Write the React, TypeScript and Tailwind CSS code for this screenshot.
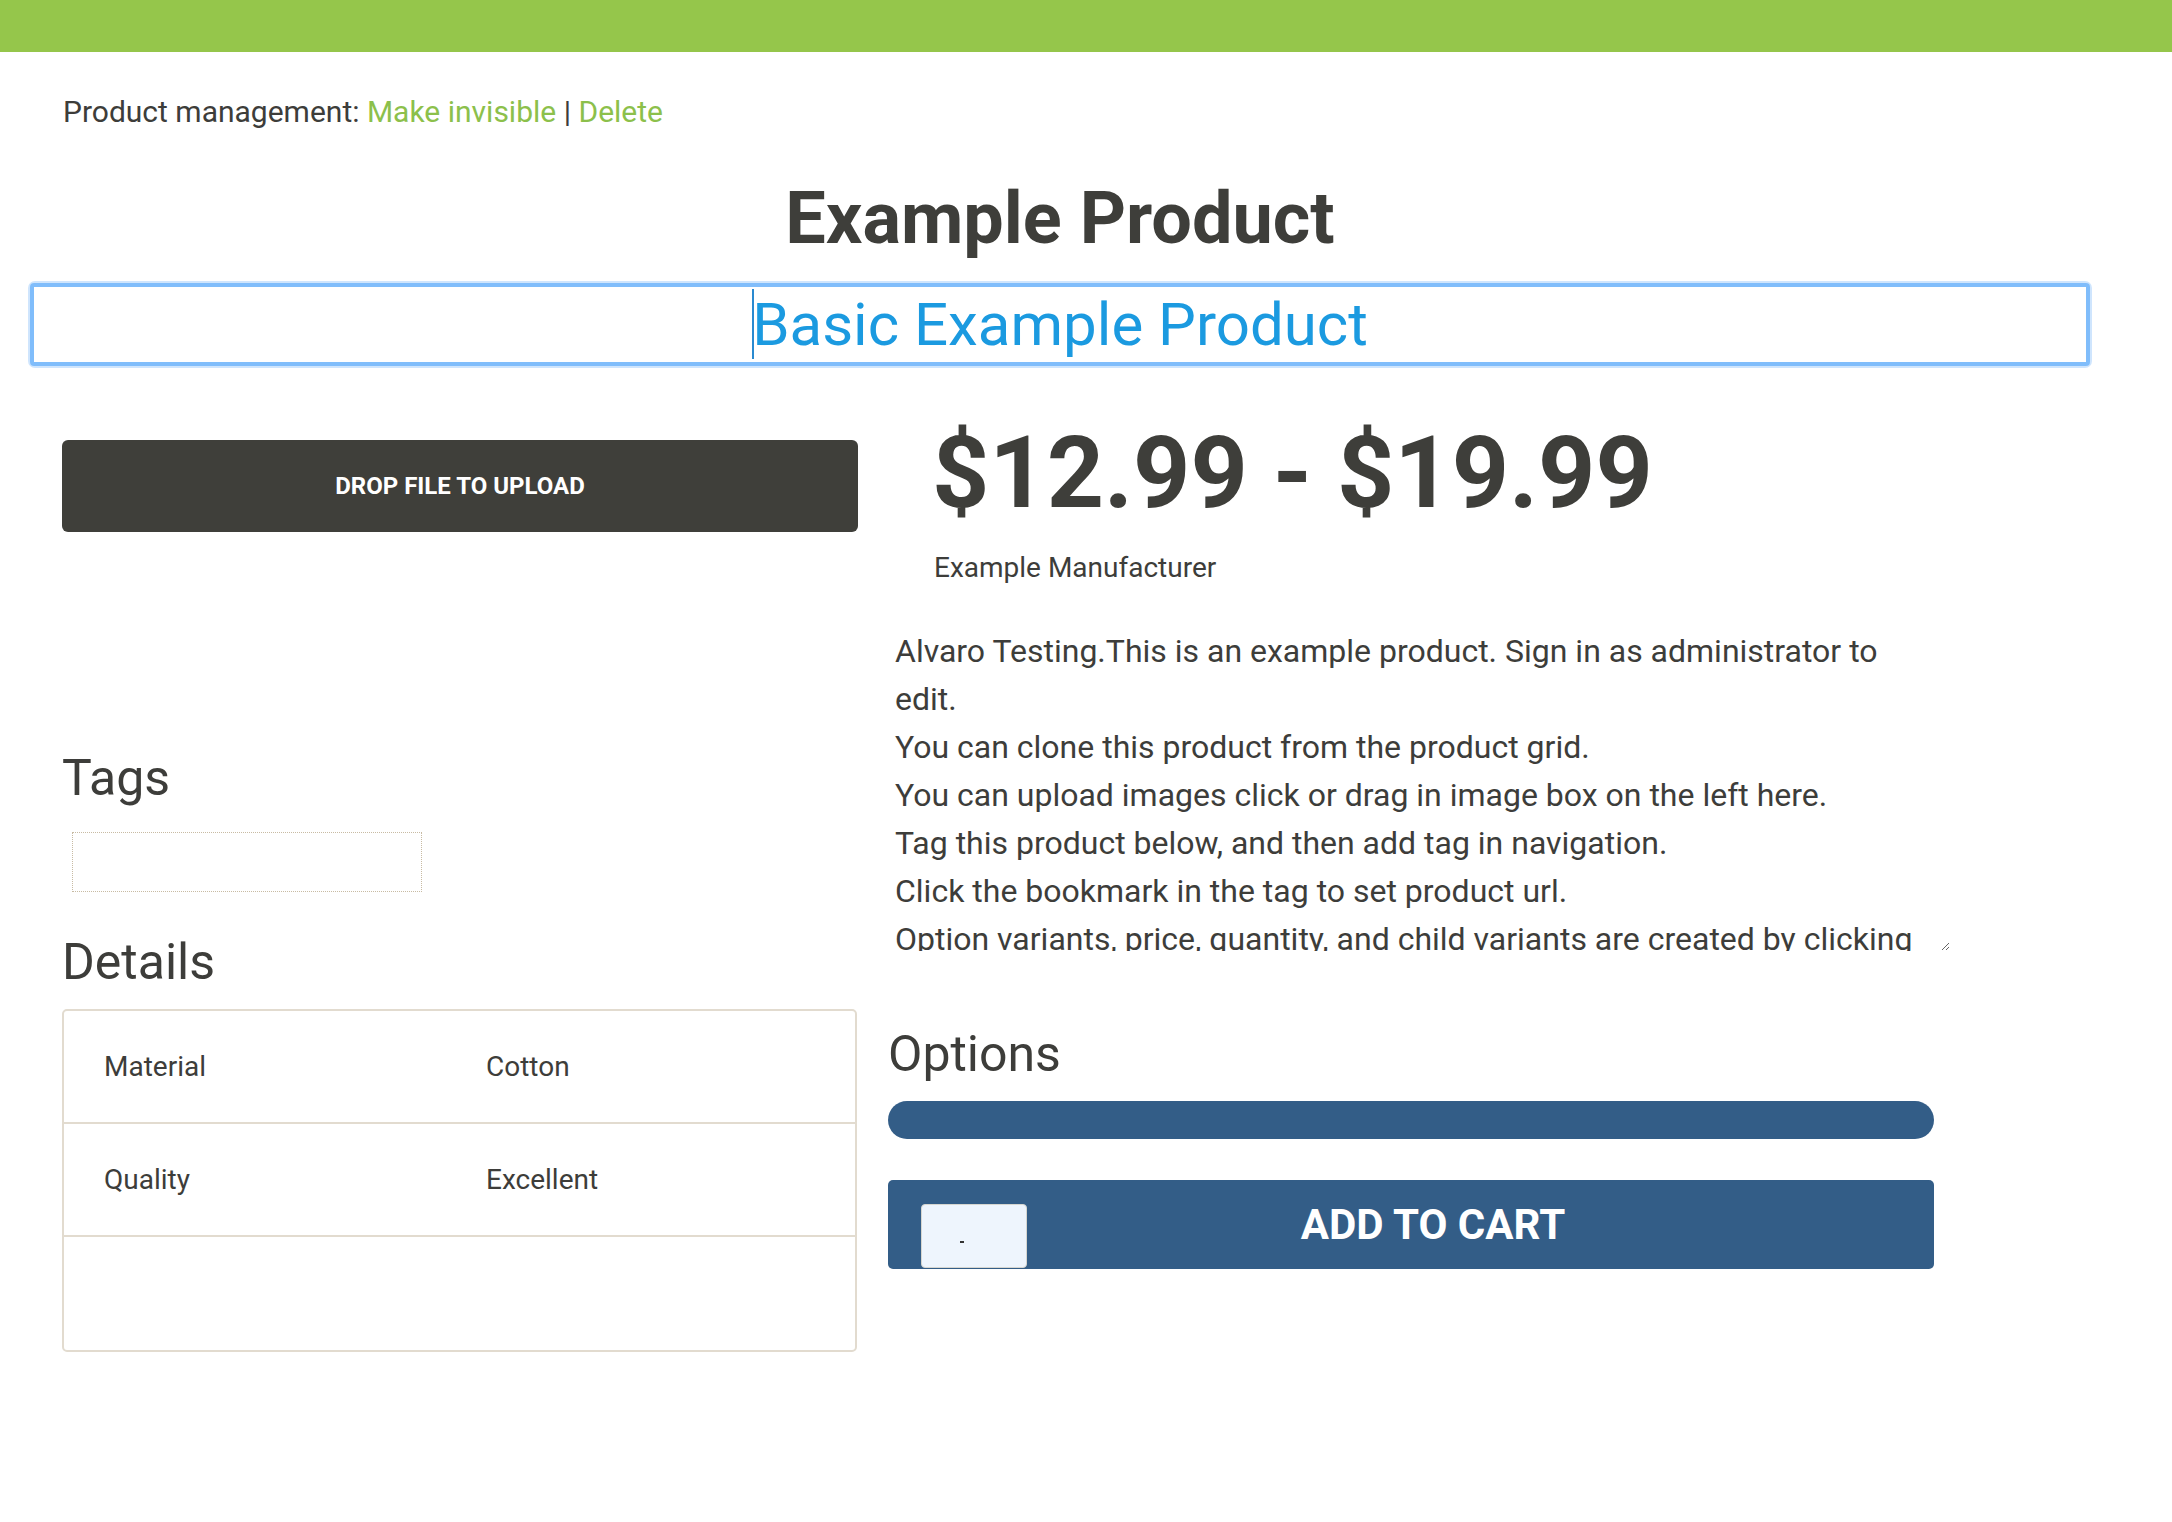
import React from "react";

const description = [
  "Alvaro Testing.This is an example product. Sign in as administrator to edit.",
  "You can clone this product from the product grid.",
  "You can upload images click or drag in image box on the left here.",
  "Tag this product below, and then add tag in navigation.",
  "Click the bookmark in the tag to set product url.",
  "Option variants, price, quantity, and child variants are created by clicking on the options button below.",
].join("\n");

const details = [
  { name: "Material", value: "Cotton" },
  { name: "Quality", value: "Excellent" },
  { name: "", value: "" },
];

function LeftColumn() {
  return (
    <div className="w-[796px] ml-[32px] shrink-0">
      <button className="w-full h-[92px] rounded-[6px] bg-[#3f3f3a] text-white text-[24px] font-bold uppercase">
        Drop file to upload
      </button>

      <h3 className="mt-[220px] text-[50px] leading-[52px]">Tags</h3>
      <div className="ml-[10px] mt-[28px] w-[350px] h-[60px] border border-dotted border-[#c8bba3]" />

      <h3 className="mt-[44px] text-[50px] leading-[52px]">Details</h3>
      <div className="mt-[21px] w-[795px] rounded-[5px] border-2 border-[#e2dbcf]">
        {details.map((d, i) => (
          <div
            key={i}
            className={
              "grid grid-cols-[382px_1fr] h-[113px] items-center text-[28px] " +
              (i < details.length - 1 ? "border-b-2 border-[#e2dbcf]" : "")
            }
          >
            <div className="px-[40px]">{d.name}</div>
            <div className="px-[40px]">{d.value}</div>
          </div>
        ))}
      </div>
    </div>
  );
}

function RightColumn() {
  return (
    <div className="ml-[30px] w-[1062px] shrink-0">
      <h2 className="pl-[44px] -mt-[27px] text-[100px] leading-[120px] font-bold text-[#3e3e3a]">
        $12.99 - $19.99
      </h2>
      <div className="pl-[46px] mt-[20px] text-[28px] leading-[30px]">
        Example Manufacturer
      </div>
      <textarea
        readOnly
        value={description}
        className="block mt-[44px] w-[1062px] h-[324px] pl-[7px] pr-[15px] py-0 text-[32px] leading-[48px] text-[#3d3d3a] outline-none overflow-hidden resize-y bg-white"
      />
      <h3 className="mt-[77px] w-[1046px] text-[50px] leading-[52px]">Options</h3>
      <div className="mt-[21px] w-[1046px] h-[38px] rounded-full bg-[#335d87]" />
      <button className="relative mt-[41px] w-[1046px] h-[89px] rounded-[5px] bg-[#335d87] text-white">
        <input
          readOnly
          value=""
          className="absolute left-[33px] bottom-[1px] w-[106px] h-[64px] rounded-[4px] border border-[#d6d6d0] bg-[#eef5fd]"
        />
        <span className="absolute left-[72px] bottom-[26px] w-[4px] h-[2px] bg-[#333]" />
        <span className="block pl-[44px] text-[42px] font-bold uppercase leading-none">Add to cart</span>
      </button>
    </div>
  );
}

export default function App() {
  return (
    <div className="min-h-screen bg-white font-[Roboto,sans-serif] text-[#3d3d3a]">
      <div className="h-[52px] bg-[#95c64b]" />
      <div className="w-[2120px] px-[30px]">
        <p className="mt-[44px] pl-[33px] text-[30px] leading-[32px]">
          Product management:{" "}
          <a href="#" className="text-[#8cc04b]">Make invisible</a> |{" "}
          <a href="#" className="text-[#8cc04b]">Delete</a>
        </p>
        <h1 className="mt-[51px] text-center text-[72px] leading-[80px] font-bold text-[#3e3e3a]">
          Example Product
        </h1>
        <div className="relative mt-[24px] rounded-[5px] shadow-[0_0_0_2px_#cfe5fd]">
          <input
            readOnly
            value="Basic Example Product"
            className="block w-full h-[83px] rounded-[4px] border-[4px] border-[#80bdfb] bg-white text-center text-[60px] text-[#1b9ae0] outline-none"
          />
          <span className="absolute left-[calc(50%-308px)] top-[6px] w-[2px] h-[70px] bg-[#2a8ad0]" />
        </div>
        <div className="flex mt-[74px] pb-[160px]">
          <LeftColumn />
          <RightColumn />
        </div>
      </div>
    </div>
  );
}
